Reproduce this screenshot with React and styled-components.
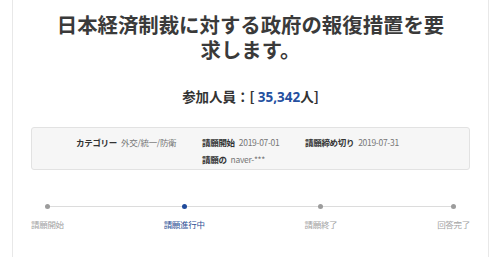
import React from "react";
import styled, { createGlobalStyle } from "styled-components";

const GlobalStyle = createGlobalStyle`
  html, body {
    margin: 0;
    padding: 0;
    background: #fff;
  }
  body {
    font-family: "Noto Sans CJK JP", "Noto Sans", sans-serif;
  }
`;

const Page = styled.div`
  margin: 0 11px 0 12px;
  height: 257px;
  border-left: 1px solid #e8e8e8;
  border-right: 1px solid #e8e8e8;
  box-sizing: border-box;
  padding: 0 18px;
`;

const Title = styled.h1`
  margin: 0;
  padding-top: 12px;
  font-size: 20.4px;
  line-height: 25px;
  font-weight: 700;
  color: #3a3a3a;
  text-align: center;
`;

const Count = styled.p`
  margin: 25px 0 0;
  font-size: 13.5px;
  line-height: 18px;
  font-weight: 700;
  color: #333;
  text-align: center;

  strong {
    color: #24509f;
    font-family: "Noto Sans", sans-serif;
    font-weight: 700;
  }
`;

const InfoBox = styled.div`
  margin-top: 21px;
  height: 43px;
  box-sizing: border-box;
  background: #f6f6f6;
  border: 1px solid #e2e2e2;
  border-radius: 3px;
  padding: 8px 0 0 44px;
  display: grid;
  grid-template-columns: 126px 103px auto;
  row-gap: 1px;
`;

const Item = styled.div`
  grid-column: ${(p) => p.col || "auto"};
  font-size: 8.5px;
  line-height: 12px;
  letter-spacing: -0.3px;
  white-space: nowrap;
  color: #777;

  b {
    color: #333;
    font-weight: 700;
    margin-right: 4px;
  }
`;

const Steps = styled.ol`
  position: relative;
  list-style: none;
  margin: 33px 0 0;
  padding: 0;
  display: flex;
  justify-content: space-between;

  &::before {
    content: "";
    position: absolute;
    left: 16px;
    right: 15px;
    top: 3px;
    height: 1px;
    background: #dcdcdc;
  }
`;

const Step = styled.li`
  position: relative;
  display: flex;
  flex-direction: column;
  align-items: center;
  gap: 9px;
  font-size: 8.5px;
  line-height: 12px;
  letter-spacing: -0.3px;
  color: ${(p) => (p.active ? "#2d4f96" : "#a3a3a3")};

  &::before {
    content: "";
    width: 5px;
    height: 5px;
    border-radius: 50%;
    background: ${(p) => (p.active ? "#1f4a9b" : "#9c9c9c")};
    margin-top: 1px;
  }
`;

const steps = [
  { label: "請願開始" },
  { label: "請願進行中", active: true },
  { label: "請願終了" },
  { label: "回答完了" },
];

export default function App() {
  return (
    <>
      <GlobalStyle />
      <Page>
        <Title>
          日本経済制裁に対する政府の報復措置を要
          <br />
          求します。
        </Title>
        <Count>
          参加人員：[ <strong>35,342</strong>人]
        </Count>
        <InfoBox>
          <Item>
            <b>カテゴリー</b>外交/統一/防衛
          </Item>
          <Item>
            <b>請願開始</b>2019-07-01
          </Item>
          <Item>
            <b>請願締め切り</b>2019-07-31
          </Item>
          <Item col="2">
            <b>請願の</b>naver-***
          </Item>
        </InfoBox>
        <Steps>
          {steps.map((s) => (
            <Step key={s.label} active={s.active}>
              {s.label}
            </Step>
          ))}
        </Steps>
      </Page>
    </>
  );
}
